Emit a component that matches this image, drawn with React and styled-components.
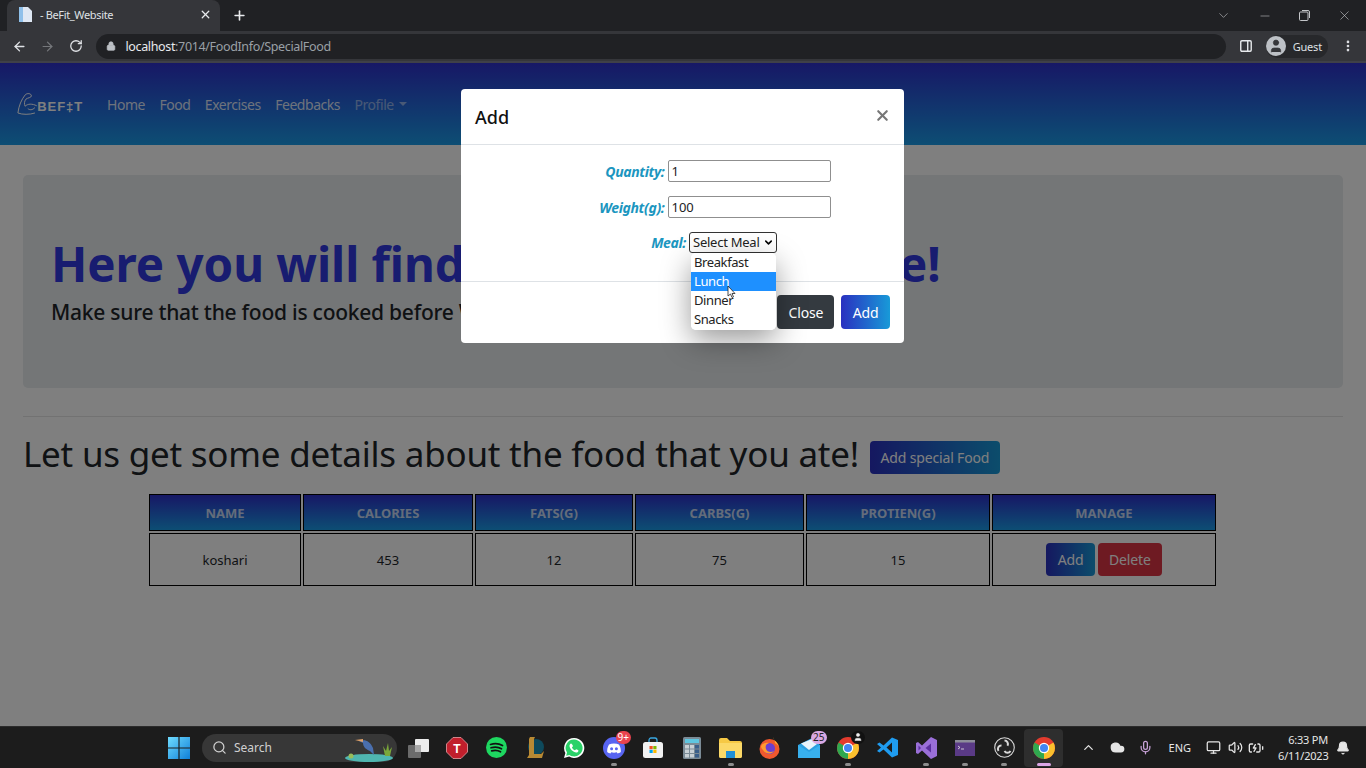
import React from 'react';
import styled, { createGlobalStyle } from 'styled-components';
import { ArrowLeft, ArrowRight, RotateCw, Lock, X, Plus, ChevronDown, Minus, Search, Mic, Volume2, Cloud, ChevronUp, MoreVertical, PanelRight, Monitor, BatteryCharging, Bell, User } from 'lucide-react';

const UI = '"Noto Sans", "Open Sans", sans-serif';

const GlobalStyle = createGlobalStyle`
  html, body { margin: 0; padding: 0; height: 100%; overflow: hidden; }
  body { font-family: ${UI}; background: #fff; }
  * { box-sizing: border-box; }
`;

const Screen = styled.div`
  position: relative;
  width: 1366px;
  height: 768px;
  display: flex;
  flex-direction: column;
  overflow: hidden;
`;

// ── browser frame ──

const TabStrip = styled.div`
  height: 31px;
  background: #202124;
  display: flex;
  align-items: flex-end;
  padding-left: 7px;
  color: #e8eaed;
`;

const Tab = styled.div`
  width: 213px;
  height: 31px;
  background: #35363a;
  border-radius: 8px 8px 0 0;
  display: flex;
  align-items: center;
  padding: 0 8px 2px 11px;
  font-size: 11px;
  letter-spacing: -0.35px;
  gap: 7px;
`;

const TabTitle = styled.span`
  flex: 1;
  color: #dfe1e5;
`;

const NewTab = styled.div`
  margin: 0 0 1px 12px;
  height: 30px;
  display: flex;
  align-items: center;
`;

const WindowButtons = styled.div`
  margin-left: auto;
  height: 31px;
  display: flex;
  align-items: center;
  gap: 27px;
  padding-right: 14px;
  color: #c4c6c9;
`;

const Toolbar = styled.div`
  height: 32px;
  background: #35363a;
  border-bottom: 2px solid #3f4048;
  display: flex;
  align-items: center;
  padding: 1px 11px 1px 12px;
  gap: 13.5px;
  color: #dfe1e5;
`;

const Omnibox = styled.div`
  width: 1132px;
  height: 25px;
  border-radius: 13px;
  background: #202124;
  display: flex;
  align-items: center;
  padding-left: 10px;
  gap: 9px;
  font-size: 12.5px;
  letter-spacing: -0.35px;
  color: #9aa0a6;
`;

const Host = styled.span`
  color: #e8eaed;
`;

const Guest = styled.div`
  width: 62px;
  height: 23px;
  margin-left: -1px;
  border-radius: 12px;
  background: #27282b;
  display: flex;
  align-items: center;
  gap: 7px;
  font-size: 11px;
  letter-spacing: -0.2px;
  color: #dfe1e5;
`;

const Avatar = styled.span`
  width: 20px;
  height: 20px;
  border-radius: 50%;
  background: #bdc1c6;
  color: #35363a;
  display: flex;
  align-items: center;
  justify-content: center;
  overflow: hidden;
`;

// ── page ──

const Page = styled.main`
  flex: 1;
  min-height: 0;
  position: relative;
  background: #fff;
  display: flex;
  flex-direction: column;
`;

const Nav = styled.nav`
  height: 82px;
  background: linear-gradient(180deg, #2e30cc 0%, #1a9ce8 100%);
  display: flex;
  align-items: center;
  padding: 0 0 0 17px;
  margin-bottom: 30px;
`;

const Brand = styled.div`
  width: 66px;
  height: 26px;
  margin-right: 24px;
  display: flex;
  align-items: center;
  color: #fff;
`;

const BrandText = styled.span`
  font-family: "Liberation Sans", sans-serif;
  font-weight: 700;
  font-size: 13px;
  letter-spacing: 0.9px;
  margin: 5px 0 0 -3px;
`;

const NavLink = styled.a`
  font-size: 14px;
  letter-spacing: -0.45px;
  margin-right: 14.4px;
  color: ${({ $muted }) => ($muted ? 'rgba(255,255,255,.5)' : 'rgba(255,255,255,.85)')};
  display: flex;
  align-items: center;
  gap: 5px;
`;

const Caret = styled.i`
  border-top: 4px solid currentColor;
  border-left: 4px solid transparent;
  border-right: 4px solid transparent;
`;

const Content = styled.div`
  padding: 0 23px;
`;

const Hero = styled.section`
  height: 213px;
  background: #e9ecef;
  border-radius: 5px;
  padding: 59px 28px 0;
  margin-bottom: 28px;
`;

const HeroTitle = styled.h1`
  margin: 0;
  font-size: 47.5px;
  letter-spacing: -0.05px;
  line-height: 60px;
  font-weight: 700;
  color: #3038e0;
  white-space: nowrap;
`;

const HeroLead = styled.p`
  margin: 2px 0 0;
  font-size: 21px;
  letter-spacing: -0.25px;
  line-height: 32px;
  font-weight: 500;
  color: #212529;
  white-space: nowrap;
`;

const Rule = styled.hr`
  margin: 0 0 17px;
  border: 0;
  border-top: 1px solid rgba(0,0,0,.1);
`;

const HeadingRow = styled.div`
  display: flex;
  align-items: center;
  gap: 11px;
  height: 40px;
  margin-bottom: 18px;
`;

const Heading = styled.h2`
  margin: 0;
  font-size: 35px;
  letter-spacing: -0.23px;
  font-weight: 400;
  line-height: 40px;
  color: #212529;
  white-space: nowrap;
`;

const Button = styled.button`
  border: 0;
  border-radius: 4px;
  height: ${({ $h }) => $h || 33}px;
  padding: 0 ${({ $px }) => $px || 11}px;
  font-family: ${UI};
  font-size: 14px;
  letter-spacing: -0.15px;
  color: #fff;
  background: ${({ $variant }) => ({
    blue: 'linear-gradient(90deg, #2a30c0, #189ad8)',
    dark: '#343a40',
    red: '#dc3545',
  }[$variant])};
`;

const HeadingButton = styled(Button)`
  margin-top: 6px;
`;

const Table = styled.table`
  width: 1071px;
  margin-left: 124px;
  border-collapse: separate;
  border-spacing: 2px;
  table-layout: fixed;
  font-size: 13px;
  text-align: center;
`;

const Th = styled.th`
  height: 37px;
  padding: 0;
  border: 1px solid #000;
  background: linear-gradient(180deg, #2e30cc 0%, #1a9ce8 100%);
  color: rgba(255,255,255,.75);
  font-weight: 700;
  font-size: 13px;
`;

const Td = styled.td`
  height: 53px;
  padding: 0;
  border: 1px solid #000;
  color: #212529;
  font-weight: 400;
`;

const CellButtons = styled.div`
  display: flex;
  justify-content: center;
  gap: 3px;
`;

const Backdrop = styled.div`
  position: absolute;
  inset: 0;
  background: rgba(0,0,0,.5);
`;

// ── modal ──

const Modal = styled.div`
  position: absolute;
  left: 461px;
  top: 26px;
  width: 443px;
  height: 254px;
  background: #fff;
  border-radius: 4px;
  display: flex;
  flex-direction: column;
`;

const ModalHeader = styled.div`
  height: 56px;
  flex: none;
  border-bottom: 1px solid #dee2e6;
  display: flex;
  align-items: center;
  justify-content: space-between;
  padding: 0 13px 0 14px;
  font-size: 18px;
  font-weight: 500;
  color: #111;
`;

const ModalClose = styled.span`
  display: flex;
  margin-top: -3px;
  color: #777;
`;

const ModalBody = styled.div`
  height: 136px;
  flex: none;
  padding-top: 8px;
  display: flex;
  flex-direction: column;
  align-items: center;
`;

const Field = styled.div`
  height: ${({ $h }) => $h || 36}px;
  display: flex;
  align-items: center;
  justify-content: flex-end;
  gap: 3px;
  width: 296px;
  padding-right: ${({ $pr }) => $pr || 0}px;
`;

const FieldLabel = styled.label`
  font-size: 14px;
  letter-spacing: -0.35px;
  font-weight: 700;
  font-style: italic;
  color: #1b96c0;
`;

const TextInput = styled.div`
  width: 163px;
  height: 22px;
  border: 1px solid #8f8f8f;
  border-radius: 2px;
  font-size: 13px;
  line-height: 20px;
  padding-left: 3px;
  color: #222;
`;

const SelectWrap = styled.div`
  position: relative;
  width: 88px;
  height: 21px;
`;

const SelectBox = styled.div`
  height: 21px;
  border: 1px solid #333;
  border-radius: 3px;
  font-size: 13px;
  letter-spacing: -0.25px;
  line-height: 19px;
  padding-left: 3px;
  color: #222;
  white-space: nowrap;
`;

const SelectChevron = styled.span`
  position: absolute;
  right: 3px;
  top: 5px;
  display: flex;
`;

const Options = styled.ul`
  position: absolute;
  left: 2px;
  top: 21px;
  z-index: 3;
  width: 85px;
  margin: 0;
  padding: 0;
  list-style: none;
  background: #fff;
  border-radius: 5px;
  overflow: hidden;
  box-shadow: 0 10px 30px rgba(0,0,0,.4);
`;

const Option = styled.li`
  height: 19.3px;
  font-size: 13px;
  letter-spacing: -0.4px;
  line-height: 19px;
  padding-left: 3px;
  background: ${({ $active }) => ($active ? '#1e90ff' : '#fff')};
  color: ${({ $active }) => ($active ? '#fff' : '#222')};
`;

const Pointer = styled.svg`
  position: absolute;
  left: 38px;
  top: 53px;
  z-index: 4;
`;

const ModalFooter = styled.div`
  flex: 1;
  border-top: 1px solid #dee2e6;
  display: flex;
  align-items: center;
  justify-content: flex-end;
  gap: 7px;
  padding: 0 14px 1px 0;
`;

// ── taskbar ──

const Taskbar = styled.footer`
  height: 42px;
  background: #1c1c1c;
  border-top: 1px solid #2b2b2b;
  display: flex;
  align-items: center;
  padding-left: 168px;
  color: #e8e8e8;
`;

const SearchPill = styled.div`
  width: 195px;
  height: 28px;
  margin: 0 1.5px 0 12px;
  border-radius: 14px;
  background: #373737;
  display: flex;
  align-items: center;
  gap: 7px;
  padding-left: 10px;
  font-size: 12px;
  color: #d0d0d0;
  position: relative;
`;

const HeronWrap = styled.span`
  position: absolute;
  right: 2px;
  top: 0;
  display: flex;
`;

const AppSlot = styled.div`
  position: relative;
  width: 39.1px;
  height: 38px;
  border-radius: 4px;
  display: flex;
  align-items: center;
  justify-content: center;
  background: ${({ $active }) => ($active ? '#2e2e2e' : 'transparent')};
  &::after {
    content: '';
    display: ${({ $dot }) => ($dot ? 'block' : 'none')};
    position: absolute;
    bottom: 1px;
    left: 50%;
    transform: translateX(-50%);
    width: ${({ $active }) => ($active ? 14 : 6)}px;
    height: 3px;
    border-radius: 2px;
    background: ${({ $active }) => ($active ? '#dba6e6' : '#8d8d8d')};
  }
`;

const Badge = styled.span`
  position: absolute;
  top: ${({ $t }) => $t ?? 1}px;
  right: ${({ $r }) => $r ?? 1}px;
  min-width: 13px;
  height: 13px;
  padding: 0 2px;
  border-radius: 7px;
  background: ${({ $bg }) => $bg};
  color: ${({ $fg }) => $fg};
  font-size: 10px;
  line-height: 13px;
  text-align: center;
  display: flex;
  align-items: center;
  justify-content: center;
`;

const Tray = styled.div`
  margin-left: 17.5px;
  flex: 1;
  display: flex;
  align-items: center;
  font-size: 11px;
  color: #e6e6e6;
`;

const TrayItem = styled.span`
  display: flex;
  align-items: center;
  justify-content: center;
  margin-left: ${({ $ml }) => $ml || 0}px;
`;

const Clock = styled.div`
  margin-left: 14px;
  width: 50px;
  text-align: right;
  line-height: 16px;
  font-size: 11px;
  letter-spacing: -0.2px;
  white-space: nowrap;
`;

// ── drawn icons ──

const Muscle = () => (
  <svg width="26" height="26" viewBox="0 0 26 26" fill="none" stroke="#fff" strokeWidth="1.1">
    <path d="M1 23C2 15 5 8 9 3C11 0.5 16 1 16 4C16 6 12 6 10 7.5C8 10 8 13 9 15.5C12 12.5 17 12.5 22 15" />
    <path d="M1 23C6 25 14 25 20 23" />
    <path d="M12 18C14 20 17 20 20 17" />
  </svg>
);

const WinLogo = () => (
  <svg width="22" height="22" viewBox="0 0 22 22">
    <defs>
      <linearGradient id="win" x1="0" y1="0" x2="1" y2="1">
        <stop offset="0" stopColor="#6fdcff" />
        <stop offset="1" stopColor="#0f7fd8" />
      </linearGradient>
    </defs>
    <path fill="url(#win)" d="M0 0h10.4v10.4H0zM11.6 0H22v10.4H11.6zM0 11.6h10.4V22H0zM11.6 11.6H22V22H11.6z" />
  </svg>
);

const Heron = () => (
  <svg width="52" height="28" viewBox="0 0 52 28">
    <ellipse cx="26" cy="24" rx="24" ry="4" fill="#4fb6b0" />
    <path d="M16 7C22 5 27 7 30 14L31 21L27 17C22 15 20 12 20 9Z" fill="#4a6fae" />
    <path d="M12 6L20 5L20 8Z" fill="#e2a36b" />
    <path d="M42 22L40 12L43 17L45 9L46 17L49 13L47 22Z" fill="#7aa83a" />
    <circle cx="8" cy="22" r="2.5" fill="#98bd5a" />
  </svg>
);

const Cube = () => (
  <svg width="22" height="22" viewBox="0 0 22 22">
    <rect x="1" y="8" width="13" height="13" rx="1" fill="#6b6b6b" />
    <rect x="8" y="2" width="14" height="13" rx="1" fill="#ececec" />
    <rect x="8" y="8" width="6" height="7" fill="#a8a8a8" />
  </svg>
);

const StopT = () => (
  <svg width="22" height="22" viewBox="0 0 22 22">
    <path d="M7 0.5h8l6.5 6.5v8L15 21.5H7L0.5 15V7z" fill="#c11f2c" stroke="#e8a0a5" strokeWidth="0.8" />
    <text x="11" y="15.5" fontSize="12" fontWeight="700" fill="#fff" textAnchor="middle" fontFamily="Liberation Sans">T</text>
  </svg>
);

const Spotify = () => (
  <svg width="21" height="21" viewBox="0 0 21 21" fill="none">
    <circle cx="10.5" cy="10.5" r="10.5" fill="#1ed760" />
    <path d="M4.5 7.5C9 6 13 6.5 16.5 8.5M5 10.8C9 9.6 12.5 10 15.5 11.8M5.7 13.8C9 13 12 13.2 14.5 14.8" stroke="#111" strokeWidth="1.7" strokeLinecap="round" />
  </svg>
);

const League = () => (
  <svg width="20" height="24" viewBox="0 0 20 24" fill="none">
    <circle cx="11" cy="11" r="8" fill="#0e4a5c" />
    <path d="M5 1h5l-1 2v15h7l3-3-2 7H2l2-3V3z" fill="#b88a34" />
  </svg>
);

const WhatsApp = () => (
  <svg width="22" height="22" viewBox="0 0 22 22">
    <path d="M11 1a10 10 0 0 0-8.6 15L1 21l5.2-1.4A10 10 0 1 0 11 1z" fill="#fff" />
    <path d="M11 2.6a8.4 8.4 0 0 0-7 13l-.8 3.1 3.2-.8A8.4 8.4 0 1 0 11 2.6z" fill="#2ad268" />
    <path d="M8 6.5c-.5 0-1.5 1-1.5 2.3 0 3 3.7 6.7 6.7 6.7 1.3 0 2.3-1 2.3-1.8 0-.4-2-1.5-2.4-1.4-.3.1-.7 1-1.1 1-.9 0-3-2-3-3 0-.4.9-.8 1-1.1C10.1 8.5 8.5 6.5 8 6.5z" fill="#fff" />
  </svg>
);

const Discord = () => (
  <svg width="22" height="22" viewBox="0 0 22 22">
    <circle cx="11" cy="11" r="11" fill="#5865f2" />
    <path d="M6 7.5C9 6 13 6 16 7.5C17.5 10 18 12.5 17.8 15C16.5 16 15.4 16.3 14.5 16.5L13.8 15.3C12 15.8 10 15.8 8.2 15.3L7.5 16.5C6.6 16.3 5.5 16 4.2 15C4 12.5 4.5 10 6 7.5z" fill="#fff" />
    <circle cx="8.6" cy="11.7" r="1.5" fill="#5865f2" />
    <circle cx="13.4" cy="11.7" r="1.5" fill="#5865f2" />
  </svg>
);

const Store = () => (
  <svg width="22" height="22" viewBox="0 0 22 22" fill="none">
    <path d="M7 6V3.5C7 2 8 1 9 1h4c1 0 2 1 2 2.5V6" stroke="#39a6e0" strokeWidth="1.3" />
    <rect x="1" y="5" width="20" height="16" rx="2.5" fill="#f2f2f2" />
    <rect x="7.5" y="9" width="3.2" height="3.2" fill="#f25022" />
    <rect x="11.3" y="9" width="3.2" height="3.2" fill="#7fba00" />
    <rect x="7.5" y="12.8" width="3.2" height="3.2" fill="#00a4ef" />
    <rect x="11.3" y="12.8" width="3.2" height="3.2" fill="#ffb900" />
  </svg>
);

const Calculator = () => (
  <svg width="18" height="22" viewBox="0 0 18 22">
    <rect width="18" height="22" rx="1.5" fill="#7b8b96" />
    <rect x="2" y="2" width="14" height="4" fill="#5fc6e0" />
    {[0, 1, 2].flatMap((r) => [0, 1, 2].map((c) => (
      <rect key={`${r}${c}`} x={2 + c * 5} y={8 + r * 4.5} width="4" height="3.5" fill={c === 2 ? '#3a5f8a' : '#c9d1d6'} />
    )))}
  </svg>
);

const Folder = () => (
  <svg width="23" height="20" viewBox="0 0 23 20">
    <path d="M0 2a2 2 0 0 1 2-2h6l3 3h10a2 2 0 0 1 2 2v13a2 2 0 0 1-2 2H2a2 2 0 0 1-2-2z" fill="#f6c945" />
    <path d="M0 5h23v13a2 2 0 0 1-2 2H2a2 2 0 0 1-2-2z" fill="#fbd968" />
    <rect x="7" y="13" width="9" height="7" fill="#1f8fd6" />
  </svg>
);

const Firefox = () => (
  <svg width="21" height="22" viewBox="0 0 21 22">
    <circle cx="10.5" cy="12" r="10" fill="#f0582e" />
    <path d="M14 0c1 4 6 6 6 12 0-3-2-5-4-6 0-2-1-4-2-6z" fill="#ffb02e" />
    <circle cx="10.5" cy="11.5" r="5.5" fill="#6b3fd1" />
    <path d="M2 9c2-3 5-4 8-3-3 1-4 3-3 6s5 4 8 2c-3 4-9 3-11-1-1-1-2-2-2-4z" fill="#ff9a2e" />
  </svg>
);

const Mail = () => (
  <svg width="22" height="20" viewBox="0 0 22 20">
    <path d="M0 7L14 0l8 7v13H0z" fill="#2b9fe0" />
    <path d="M3 5.5L14 1l5 5-8 6z" fill="#e9f4fb" />
    <path d="M0 7l11 7 11-7v13H0z" fill="#38b0ee" />
  </svg>
);

const Chrome = () => (
  <svg width="22" height="22" viewBox="0 0 22 22">
    <circle cx="11" cy="11" r="11" fill="#e33b2e" />
    <path d="M11 11L20.5 5.5A11 11 0 0 1 11 22z" fill="#fbc02d" />
    <path d="M11 11L11 22A11 11 0 0 1 1.5 5.5z" fill="#2fa84f" />
    <circle cx="11" cy="11" r="5.2" fill="#fff" />
    <circle cx="11" cy="11" r="4" fill="#4285f4" />
  </svg>
);

const VSCode = () => (
  <svg width="21" height="21" viewBox="0 0 21 21">
    <path d="M15 0.5L21 3v15l-6 2.5L6.5 12.5 2.5 15.5 0 14l4-3.5L0 7l2.5-1.5 4 3z" fill="#1f9cf0" />
    <path d="M15 5.5L9.5 10.5 15 15.5z" fill="#1c1c1c" />
  </svg>
);

const VisualStudio = () => (
  <svg width="21" height="22" viewBox="0 0 21 22">
    <path d="M15 0L21 3v16l-6 3L6 13.5 2 17 0 16V6l2-1 4 3.5z" fill="#9a6fd8" />
    <path d="M15 6.5L9.5 11 15 15.5z" fill="#5b2f9e" />
    <path d="M2.5 8.5v5L5 11z" fill="#5b2f9e" />
  </svg>
);

const Terminal = () => (
  <svg width="20" height="16" viewBox="0 0 20 16">
    <rect width="20" height="16" fill="#5a3a86" />
    <rect width="20" height="2.5" fill="#8d8d9a" />
    <path d="M3 6l2 1.5L3 9M6 9h3" stroke="#e6e6e6" strokeWidth="0.8" fill="none" />
  </svg>
);

const Obs = () => (
  <svg width="21" height="21" viewBox="0 0 21 21" fill="none" stroke="#d8d8d8">
    <circle cx="10.5" cy="10.5" r="9.8" fill="#222" strokeWidth="1.1" />
    <path d="M10.5 3.5a3.5 3.5 0 0 1 3 5.2M16.5 14a3.5 3.5 0 0 1-6 0M4.5 14a3.5 3.5 0 0 1 3-5.5" strokeWidth="2" />
  </svg>
);

const apps = [
  { id: 'taskview', icon: <Cube /> },
  { id: 'tunnelbear', icon: <StopT /> },
  { id: 'spotify', icon: <Spotify /> },
  { id: 'league', icon: <League /> },
  { id: 'whatsapp', icon: <WhatsApp /> },
  { id: 'discord', icon: <Discord />, dot: true, badge: '9+', badgeBg: '#e9434f', badgeFg: '#fff', r: 2, t: 2 },
  { id: 'store', icon: <Store /> },
  { id: 'calc', icon: <Calculator /> },
  { id: 'files', icon: <Folder />, dot: true },
  { id: 'firefox', icon: <Firefox /> },
  { id: 'mail', icon: <Mail />, badge: '25', badgeBg: '#d9a8e4', badgeFg: '#222', r: 2, t: 2 },
  { id: 'chrome-guest', icon: <Chrome />, dot: true, badge: <User size={10} fill="#eee" strokeWidth={1} />, badgeBg: '#111', badgeFg: '#eee', r: 3, t: 2 },
  { id: 'vscode', icon: <VSCode /> },
  { id: 'vs', icon: <VisualStudio />, dot: true },
  { id: 'term', icon: <Terminal />, dot: true },
  { id: 'obs', icon: <Obs />, dot: true },
  { id: 'chrome', icon: <Chrome />, dot: true, active: true },
];

const columns = ['NAME', 'CALORIES', 'FATS(G)', 'CARBS(G)', 'PROTIEN(G)', 'MANAGE'];
const widths = [152, 170, 158, 169, 184, 224];

export default function App() {
  return (
    <Screen>
      <GlobalStyle />
      <TabStrip>
        <Tab>
          <svg width="15" height="15" viewBox="0 0 15 15"><path d="M1 0h9l4 4v11H1z" fill="#dfe8f4" /><path d="M1 0h4v15H1z" fill="#8fc0ea" /></svg>
          <TabTitle>- BeFit_Website</TabTitle>
          <X size={13} strokeWidth={2.4} />
        </Tab>
        <NewTab><Plus size={15} strokeWidth={2.6} /></NewTab>
        <WindowButtons>
          <ChevronDown size={15} strokeWidth={1} />
          <Minus size={14} strokeWidth={1} />
          <svg width="11" height="11" viewBox="0 0 11 11" fill="none" stroke="currentColor"><rect x="0.5" y="2" width="8.5" height="8.5" rx="1" /><path d="M3 .5h6A1.5 1.5 0 0 1 10.5 2v6" /></svg>
          <X size={15} strokeWidth={1} />
        </WindowButtons>
      </TabStrip>
      <Toolbar>
        <ArrowLeft size={15} strokeWidth={2.2} />
        <ArrowRight size={15} strokeWidth={2} color="#75777b" />
        <RotateCw size={14} strokeWidth={2.2} />
        <Omnibox>
          <Lock size={10} fill="#bdc1c6" strokeWidth={2} color="#bdc1c6" />
          <span><Host>localhost</Host>:7014/FoodInfo/SpecialFood</span>
        </Omnibox>
        <PanelRight size={14} color="#e8eaed" strokeWidth={2.4} />
        <Guest>
          <Avatar><User size={16} fill="#35363a" strokeWidth={1} /></Avatar>
          Guest
        </Guest>
        <MoreVertical size={14} strokeWidth={2.6} />
      </Toolbar>

      <Page>
        <Nav>
          <Brand>
            <Muscle />
            <BrandText>BEF‡T</BrandText>
          </Brand>
          <NavLink>Home</NavLink>
          <NavLink>Food</NavLink>
          <NavLink>Exercises</NavLink>
          <NavLink>Feedbacks</NavLink>
          <NavLink $muted>Profile <Caret /></NavLink>
        </Nav>
        <Content>
          <Hero>
            <HeroTitle>Here you will find your raw food here!</HeroTitle>
            <HeroLead>Make sure that the food is cooked before Weighing it!</HeroLead>
          </Hero>
          <Rule />
          <HeadingRow>
            <Heading>Let us get some details about the food that you ate!</Heading>
            <HeadingButton $variant="blue" $px={10.5}>Add special Food</HeadingButton>
          </HeadingRow>
          <Table>
            <colgroup>
              {columns.map((c, i) => <col key={c} style={{ width: widths[i] }} />)}
            </colgroup>
            <thead>
              <tr>{columns.map((c) => <Th key={c}>{c}</Th>)}</tr>
            </thead>
            <tbody>
              <tr>
                <Td>koshari</Td>
                <Td>453</Td>
                <Td>12</Td>
                <Td>75</Td>
                <Td>15</Td>
                <Td>
                  <CellButtons>
                    <Button $variant="blue" $px={11.5}>Add</Button>
                    <Button $variant="red">Delete</Button>
                  </CellButtons>
                </Td>
              </tr>
            </tbody>
          </Table>
        </Content>
        <Backdrop />
        <Modal>
          <ModalHeader>
            Add
            <ModalClose><X size={17} strokeWidth={3} /></ModalClose>
          </ModalHeader>
          <ModalBody>
            <Field>
              <FieldLabel>Quantity:</FieldLabel>
              <TextInput>1</TextInput>
            </Field>
            <Field>
              <FieldLabel>Weight(g):</FieldLabel>
              <TextInput>100</TextInput>
            </Field>
            <Field $pr={53.5} $h={34}>
              <FieldLabel>Meal:</FieldLabel>
              <SelectWrap>
                <SelectBox>Select Meal</SelectBox>
                <SelectChevron><ChevronDown size={11} strokeWidth={3.4} /></SelectChevron>
                <Options>
                  <Option>Breakfast</Option>
                  <Option $active>Lunch</Option>
                  <Option>Dinner</Option>
                  <Option>Snacks</Option>
                </Options>
                <Pointer width="10" height="14" viewBox="0 0 10 14">
                  <path d="M1 1v10l2.5-2 1.5 3.5 1.5-.6L5 8.5h3z" fill="#fff" stroke="#222" strokeWidth="0.8" />
                </Pointer>
              </SelectWrap>
            </Field>
          </ModalBody>
          <ModalFooter>
            <Button $variant="dark" $h={34} $px={11}>Close</Button>
            <Button $variant="blue" $h={34} $px={11.5}>Add</Button>
          </ModalFooter>
        </Modal>
      </Page>

      <Taskbar>
        <WinLogo />
        <SearchPill>
          <Search size={15} />
          Search
          <HeronWrap><Heron /></HeronWrap>
        </SearchPill>
        {apps.map((a) => (
          <AppSlot key={a.id} $dot={a.dot} $active={a.active}>
            {a.icon}
            {a.badge && <Badge $bg={a.badgeBg} $fg={a.badgeFg} $r={a.r} $t={a.t}>{a.badge}</Badge>}
          </AppSlot>
        ))}
        <Tray>
          <ChevronUp size={15} />
          <TrayItem $ml={14}><Cloud size={15} fill="#e6e6e6" /></TrayItem>
          <TrayItem $ml={13}><Mic size={15} color="#c8a2d8" /></TrayItem>
          <TrayItem $ml={16}>ENG</TrayItem>
          <TrayItem $ml={14.5}><Monitor size={15} /></TrayItem>
          <TrayItem $ml={7}><Volume2 size={15} /></TrayItem>
          <TrayItem $ml={5.5}><BatteryCharging size={16} /></TrayItem>
          <Clock>6:33 PM<br />6/11/2023</Clock>
          <TrayItem $ml={8}><Bell size={14} fill="#e6e6e6" /></TrayItem>
        </Tray>
      </Taskbar>
    </Screen>
  );
}
